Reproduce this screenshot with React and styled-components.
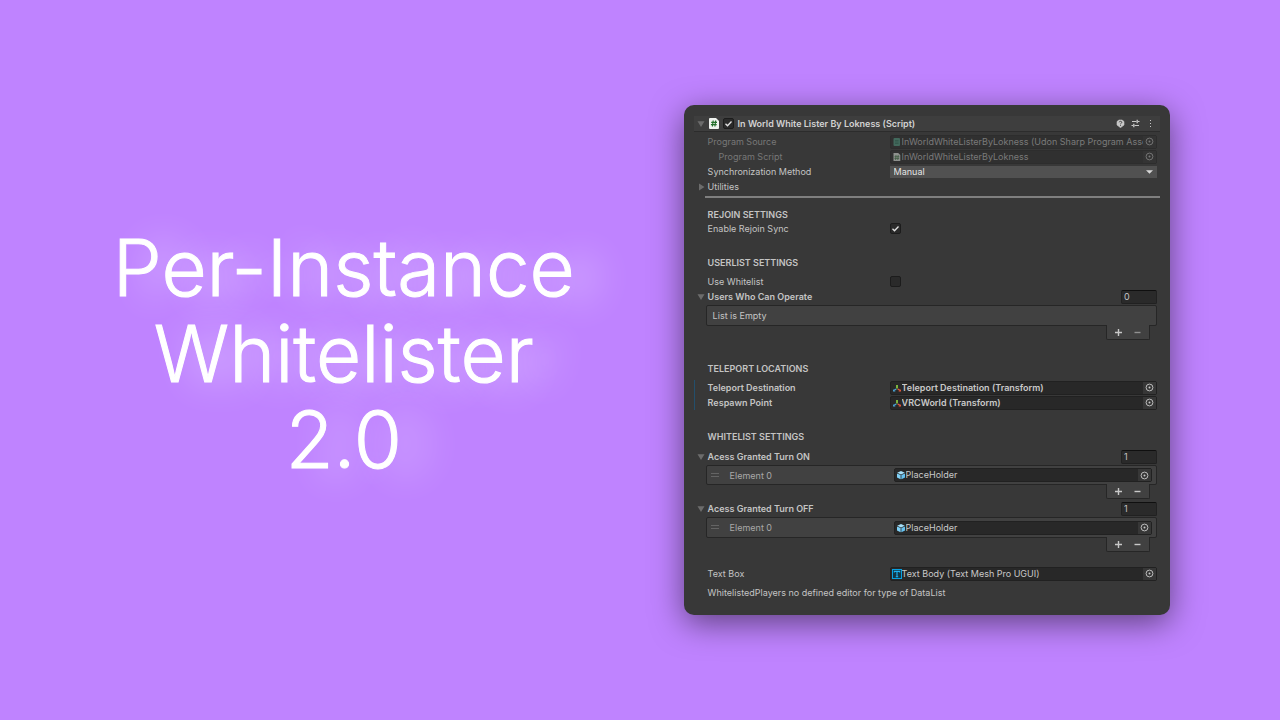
import React, { useId } from "react";
import styled, { createGlobalStyle, css } from "styled-components";

const GlobalStyle = createGlobalStyle`
  *, *::before, *::after { box-sizing: border-box; }
  body { margin: 0; background: #bf83ff; }
  button, input, select { font: inherit; color: inherit; margin: 0; padding: 0; border: 0; background: none; border-radius: 0; }
  svg { display: block; flex: none; }
`;

const Page = styled.main`
  min-height: 100vh;
  display: flex;
  align-items: center;
  padding-right: 110px;
  font-family: Inter, "Liberation Sans", sans-serif;
`;

const Hero = styled.section`
  flex: 1;
  padding: 0 0 12px 4px;
  text-align: center;
`;

const Title = styled.h1`
  margin: 0;
  font-family: Inter, Lato, sans-serif;
  font-size: 78px;
  font-weight: 300;
  line-height: 86px;
  color: #fff;
  -webkit-text-stroke: 1px #fff;
  text-shadow: 28px 4px 36px rgba(255, 255, 255, 0.6);
`;

const TitleLine = styled.span`
  display: block;
`;

const Panel = styled.section`
  flex: 0 0 38vw;
  padding: 11px 10px 15px;
  border-radius: 10px;
  background: #383838;
  box-shadow: 0 8px 32px rgba(0, 0, 0, 0.5);
  color: #c4c4c4;
  font-size: 9px;
  line-height: 15px;
`;

const Header = styled.header`
  display: flex;
  align-items: center;
  height: 16px;
  padding: 0 5px 0 2px;
  margin-bottom: 2px;
  background: #3e3e3e;
  border-bottom: 1px solid #2c2c2c;
`;

const HeaderTitle = styled.label`
  flex: 1;
  margin-left: 4px;
  font-weight: 600;
  color: #d2d2d2;
`;

const HeaderActions = styled.div`
  display: flex;
  gap: 5px;
`;

const IconButton = styled.button`
  display: grid;
  place-items: center;
  width: 10px;
  height: 14px;
`;

const ScriptIcon = styled.span`
  margin: 0 4px 0 3px;
`;

const Row = styled.div`
  display: flex;
  align-items: center;
  height: 15px;
  padding: 0 3px 0 14px;
  margin-top: ${(p) => p.$gap || 0}px;
  box-shadow: ${(p) => (p.$changed ? "inset 1px 0 #234f6c" : "none")};
`;

const Label = styled.label`
  flex: 0 0 182px;
  padding-left: ${(p) => (p.$indent ? 11 : 0)}px;
  font-weight: ${(p) => (p.$bold ? 600 : 400)};
  color: ${(p) => (p.$dim ? "#777" : "inherit")};
  white-space: nowrap;
`;

const Field = styled.div`
  flex: 1;
  min-width: 0;
  display: flex;
  align-items: center;
  height: 14px;
  padding-left: 1px;
  border: 1px solid #212121;
  border-radius: 2px;
  background: #282828;
  color: #c8c8c8;
  ${(p) =>
    p.$dim &&
    css`
      border-color: #2d2d2d;
      background: #303030;
      color: #7a7a7a;
    `}
`;

const FieldInput = styled.input`
  flex: 1;
  min-width: 0;
  height: 12px;
  line-height: 12px;
  outline: none;
  font-weight: ${(p) => (p.$bold ? 600 : 400)};
`;

const Picker = styled.button`
  display: grid;
  place-items: center;
  width: 13px;
  height: 12px;
  background: ${(p) => (p.disabled ? "#343434" : "#373737")};
`;

const SelectWrap = styled.div`
  flex: 1;
  display: grid;
  align-items: center;
  height: 12px;
  background: #515151;
  color: #e4e4e4;

  > * { grid-area: 1 / 1; }
  > svg { justify-self: end; margin-right: 4px; pointer-events: none; }
`;

const Select = styled.select`
  appearance: none;
  width: 100%;
  height: 12px;
  line-height: 12px;
  padding-left: 4px;
`;

const CheckWrap = styled.span`
  display: inline-grid;
  place-items: center;

  > * { grid-area: 1 / 1; }
  > svg { pointer-events: none; visibility: hidden; }
  > input:checked + svg { visibility: visible; }
`;

const CheckInput = styled.input`
  appearance: none;
  width: 11px;
  height: 11px;
  border: 1px solid #1c1c1c;
  border-radius: 2px;
  background: #2a2a2a;
`;

const Divider = styled.hr`
  height: 2px;
  margin: 2px 0 9px 11px;
  border: 0;
  background: #7f7f7f;
`;

const Heading = styled.h2`
  height: 14px;
  margin: ${(p) => p.$gap || 0}px 0 0 14px;
  font-size: 9px;
  line-height: 15px;
  font-weight: 600;
`;

const FoldRow = styled.div`
  display: flex;
  align-items: center;
  justify-content: space-between;
  height: 15px;
  padding: 0 3px;
  margin-top: ${(p) => p.$gap || 0}px;
`;

const FoldButton = styled.button`
  display: flex;
  align-items: center;
  gap: 3px;
  font-weight: ${(p) => (p.$bold ? 600 : 400)};
`;

const CountInput = styled.input`
  width: 36px;
  height: 14px;
  padding-left: 2px;
  border: 1px solid #212121;
  border-top-color: #0f0f0f;
  border-radius: 2px;
  background: #2a2a2a;
`;

const List = styled.ul`
  margin: 1px 3px 0 12px;
  padding: 0;
  list-style: none;
  border: 1px solid #262626;
  border-radius: 2px;
  background: #414141;
`;

const Item = styled.li`
  display: flex;
  align-items: center;
  height: ${(p) => p.$height}px;
  padding: 0 4px;
`;

const EmptyItem = styled(Item)`
  padding-left: 6px;
`;

const ItemLabel = styled.label`
  flex: 0 0 174px;
  padding-left: 10px;
  color: #a8a8a8;
`;

const ListFooter = styled.div`
  display: flex;
  align-items: center;
  justify-content: center;
  gap: 9px;
  width: 44px;
  height: 15px;
  margin: -1px 10px 0 auto;
  border: 1px solid #262626;
  border-top: 0;
  border-radius: 0 0 2px 2px;
  background: #414141;
`;

const Note = styled.p`
  margin: 4px 0 0 14px;
`;

const DownArrow = () => (
  <svg width="8" height="8" viewBox="0 0 8 8" aria-hidden="true">
    <path d="M0.5 1.2h7L4 7z" fill="#6c6c6c" />
  </svg>
);
const RightArrow = () => (
  <svg width="8" height="8" viewBox="0 0 8 8" aria-hidden="true">
    <path d="M2 0.5v7L7.5 4z" fill="#6c6c6c" />
  </svg>
);
const CheckMark = () => (
  <svg width="11" height="11" viewBox="0 0 11 11" aria-hidden="true">
    <path d="M2.5 5.7l2 2L8.5 3.5" fill="none" stroke="#e2e2e2" strokeWidth="1.3" />
  </svg>
);
const Target = () => (
  <svg width="9" height="9" viewBox="0 0 9 9" aria-hidden="true">
    <circle cx="4.5" cy="4.5" r="3.4" fill="none" stroke="currentColor" strokeWidth="0.9" />
    <circle cx="4.5" cy="4.5" r="1" fill="currentColor" />
  </svg>
);
const PageIcon = () => (
  <svg width="10" height="11" viewBox="0 0 10 11" aria-hidden="true">
    <path d="M1 0h6l3 3v7q0 1-1 1H1q-1 0-1-1V1q0-1 1-1z" fill="#f0f3f0" />
    <path d="M4.2 2.5l-.8 6M6.7 2.5l-.8 6M2.200 4.300h5.800M1.900 6.700h5.800" stroke="#23702b" strokeWidth="1.200" fill="none" />
  </svg>
);
const AssetIcon = () => (
  <svg width="10" height="10" viewBox="0 0 10 10" aria-hidden="true">
    <rect x="1.5" y="1" width="6.5" height="8" rx="1" fill="#42695c" />
    <path d="M3 3.5h3.5M3 5h3.5M3 6.5h3.5" stroke="#2f5145" strokeWidth="0.7" />
  </svg>
);
const PaleScriptIcon = () => (
  <svg width="10" height="10" viewBox="0 0 10 10" aria-hidden="true">
    <path d="M1.5 1h4.7L8.3 3v6H1.5z" fill="#8e918e" />
    <path d="M4 3l-.4 5M6.2 3l-.4 5M2.5 4.7h4.8M2.4 6.4h4.8" stroke="#3d5b40" strokeWidth="0.8" />
  </svg>
);
const TransformIcon = () => (
  <svg width="10" height="10" viewBox="0 0 10 10" aria-hidden="true" fill="none" strokeWidth="1.400">
    <path d="M5 5.500V2" stroke="#86c440" strokeWidth="1.800" />
    <path d="M4.300 6L2 7.400" stroke="#4aa3d4" />
    <path d="M1 6.200v2.300h2.600z" fill="#4aa3d4" />
    <path d="M5.700 6L8 7.400" stroke="#e0573a" />
    <path d="M9 6.200v2.300H6.400z" fill="#e0573a" />
  </svg>
);
const CubeIcon = () => (
  <svg width="10" height="10" viewBox="0 0 10 10" aria-hidden="true">
    <path d="M5 1l3.8 1.7L5 4.4 1.2 2.7z" fill="#a5e0fa" />
    <path d="M1 3.4l3.6 1.6v4.2L1 7.4z" fill="#7fd0f6" />
    <path d="M9 3.4L5.4 5v4.2L9 7.4z" fill="#66c0ee" />
  </svg>
);
const TextIcon = () => (
  <svg width="10" height="10" viewBox="0 0 10 10" aria-hidden="true">
    <rect x="0.5" y="0.5" width="9" height="9" fill="#123646" stroke="#08a0e0" />
    <path d="M2.3 3.6V2.4h5.4v1.2M5 2.4v5.2M3.8 7.7h2.4" fill="none" stroke="#1cb4f4" strokeWidth="1.1" />
  </svg>
);
const Plus = () => (
  <svg width="9" height="9" viewBox="0 0 9 9" aria-hidden="true">
    <path d="M4.5 1v7M1 4.5h7" stroke="#c8c8c8" strokeWidth="1.4" />
  </svg>
);
const Minus = ({ dim }) => (
  <svg width="9" height="9" viewBox="0 0 9 9" aria-hidden="true">
    <path d="M1.5 4.5h6" stroke={dim ? "#909090" : "#c8c8c8"} strokeWidth="1.4" />
  </svg>
);
const Handle = () => (
  <svg width="9" height="5" viewBox="0 0 9 5" aria-hidden="true">
    <path d="M0 0.5h8M0 3.5h8" stroke="#646464" />
  </svg>
);
const HelpIcon = () => (
  <svg width="9" height="9" viewBox="0 0 9 9" aria-hidden="true">
    <path d="M3 1h3l2 1.500v3.500L6 7.500 4.500 8.700 3 7.500 1 6V2.500z" fill="#c8c8c8" stroke="#c8c8c8" strokeWidth="0.600" strokeLinejoin="round" />
    <path d="M3.200 3.300q.2-1 1.300-1t1.300 1q0 .7-.7 1-.6.3-.6.9M4.500 5.900v.9" fill="none" stroke="#3a3a3a" strokeWidth="0.9" />
  </svg>
);
const PresetIcon = () => (
  <svg width="9" height="9" viewBox="0 0 9 9" aria-hidden="true" fill="none" stroke="#c8c8c8">
    <path d="M1 2.500h4.500M7 2.500h1.500M0.500 6.500H2M3.500 6.500H8" />
    <path d="M6.200 0.700v3.600M2.800 4.700v3.600" strokeWidth="1.300" />
  </svg>
);
const MoreIcon = () => (
  <svg width="9" height="9" viewBox="0 0 9 9" aria-hidden="true" fill="#c8c8c8">
    <rect x="4" y="1" width="1" height="1" />
    <rect x="4" y="4" width="1" height="1" />
    <rect x="4" y="7" width="1" height="1" />
  </svg>
);

function Checkbox(props) {
  return (
    <CheckWrap>
      <CheckInput type="checkbox" {...props} />
      <CheckMark />
    </CheckWrap>
  );
}

function ObjectField({ id, icon, value, dim, bold }) {
  return (
    <Field $dim={dim}>
      {icon}
      <FieldInput id={id} value={value} readOnly disabled={dim} $bold={bold} />
      <Picker type="button" aria-label={`Select ${value}`} disabled={dim}>
        <Target />
      </Picker>
    </Field>
  );
}

function ObjectRow({ label, indent, gap, changed, dim, bold, icon, value }) {
  const id = useId();
  return (
    <Row $gap={gap} $changed={changed}>
      <Label htmlFor={id} $indent={indent} $dim={dim} $bold={bold}>{label}</Label>
      <ObjectField id={id} icon={icon} value={value} dim={dim} bold={bold} />
    </Row>
  );
}

function CheckRow({ label, gap, checked }) {
  const id = useId();
  return (
    <Row $gap={gap}>
      <Label htmlFor={id}>{label}</Label>
      <Checkbox id={id} defaultChecked={checked} />
    </Row>
  );
}

function ListSection({ label, gap, count, value, height = 19 }) {
  const id = useId();
  return (
    <>
      <FoldRow $gap={gap}>
        <FoldButton type="button" aria-expanded="true" $bold>
          <DownArrow />
          {label}
        </FoldButton>
        <CountInput aria-label={`${label} size`} defaultValue={count} />
      </FoldRow>
      <List>
        {value ? (
          <Item $height={height}>
            <Handle />
            <ItemLabel htmlFor={id}>Element 0</ItemLabel>
            <ObjectField id={id} icon={<CubeIcon />} value={value} />
          </Item>
        ) : (
          <EmptyItem $height={height}>List is Empty</EmptyItem>
        )}
      </List>
      <ListFooter>
        <IconButton type="button" aria-label="Add"><Plus /></IconButton>
        <IconButton type="button" aria-label="Remove"><Minus dim={!value} /></IconButton>
      </ListFooter>
    </>
  );
}

export default function App() {
  return (
    <>
      <GlobalStyle />
      <Page>
        <Hero>
          <Title>
            <TitleLine>Per-Instance</TitleLine>
            <TitleLine>Whitelister</TitleLine>
            <TitleLine>2.0</TitleLine>
          </Title>
        </Hero>
        <Panel>
          <Header>
            <IconButton type="button" aria-label="Collapse" aria-expanded="true"><DownArrow /></IconButton>
            <ScriptIcon><PageIcon /></ScriptIcon>
            <Checkbox id="script-enabled" defaultChecked />
            <HeaderTitle htmlFor="script-enabled">In World White Lister By Lokness (Script)</HeaderTitle>
            <HeaderActions>
              <IconButton type="button" aria-label="Help"><HelpIcon /></IconButton>
              <IconButton type="button" aria-label="Presets"><PresetIcon /></IconButton>
              <IconButton type="button" aria-label="More"><MoreIcon /></IconButton>
            </HeaderActions>
          </Header>
          <ObjectRow label="Program Source" dim icon={<AssetIcon />} value="InWorldWhiteListerByLokness (Udon Sharp Program Asset)" />
          <ObjectRow label="Program Script" indent dim icon={<PaleScriptIcon />} value="InWorldWhiteListerByLokness" />
          <Row>
            <Label htmlFor="sync-method">Synchronization Method</Label>
            <SelectWrap>
              <Select id="sync-method" defaultValue="Manual">
                <option>Manual</option>
              </Select>
              <svg width="7" height="4" viewBox="0 0 7 4" aria-hidden="true">
                <path d="M0 0.300h7L3.500 3.800z" fill="#d8d8d8" />
              </svg>
            </SelectWrap>
          </Row>
          <FoldRow>
            <FoldButton type="button" aria-expanded="false">
              <RightArrow />
              Utilities
            </FoldButton>
          </FoldRow>
          <Divider />
          <Heading>REJOIN SETTINGS</Heading>
          <CheckRow label="Enable Rejoin Sync" checked />
          <Heading $gap={19}>USERLIST SETTINGS</Heading>
          <CheckRow label="Use Whitelist" gap={5} />
          <ListSection label="Users Who Can Operate" count="0" />
          <Heading $gap={21}>TELEPORT LOCATIONS</Heading>
          <ObjectRow label="Teleport Destination" gap={5} changed bold icon={<TransformIcon />} value="Teleport Destination (Transform)" />
          <ObjectRow label="Respawn Point" changed bold icon={<TransformIcon />} value="VRCWorld (Transform)" />
          <Heading $gap={19}>WHITELIST SETTINGS</Heading>
          <ListSection label="Acess Granted Turn ON" gap={6} count="1" value="PlaceHolder" height={18} />
          <ListSection label="Acess Granted Turn OFF" gap={2} count="1" value="PlaceHolder" />
          <ObjectRow label="Text Box" gap={14} icon={<TextIcon />} value="Text Body (Text Mesh Pro UGUI)" />
          <Note>WhitelistedPlayers no defined editor for type of DataList</Note>
        </Panel>
      </Page>
    </>
  );
}
